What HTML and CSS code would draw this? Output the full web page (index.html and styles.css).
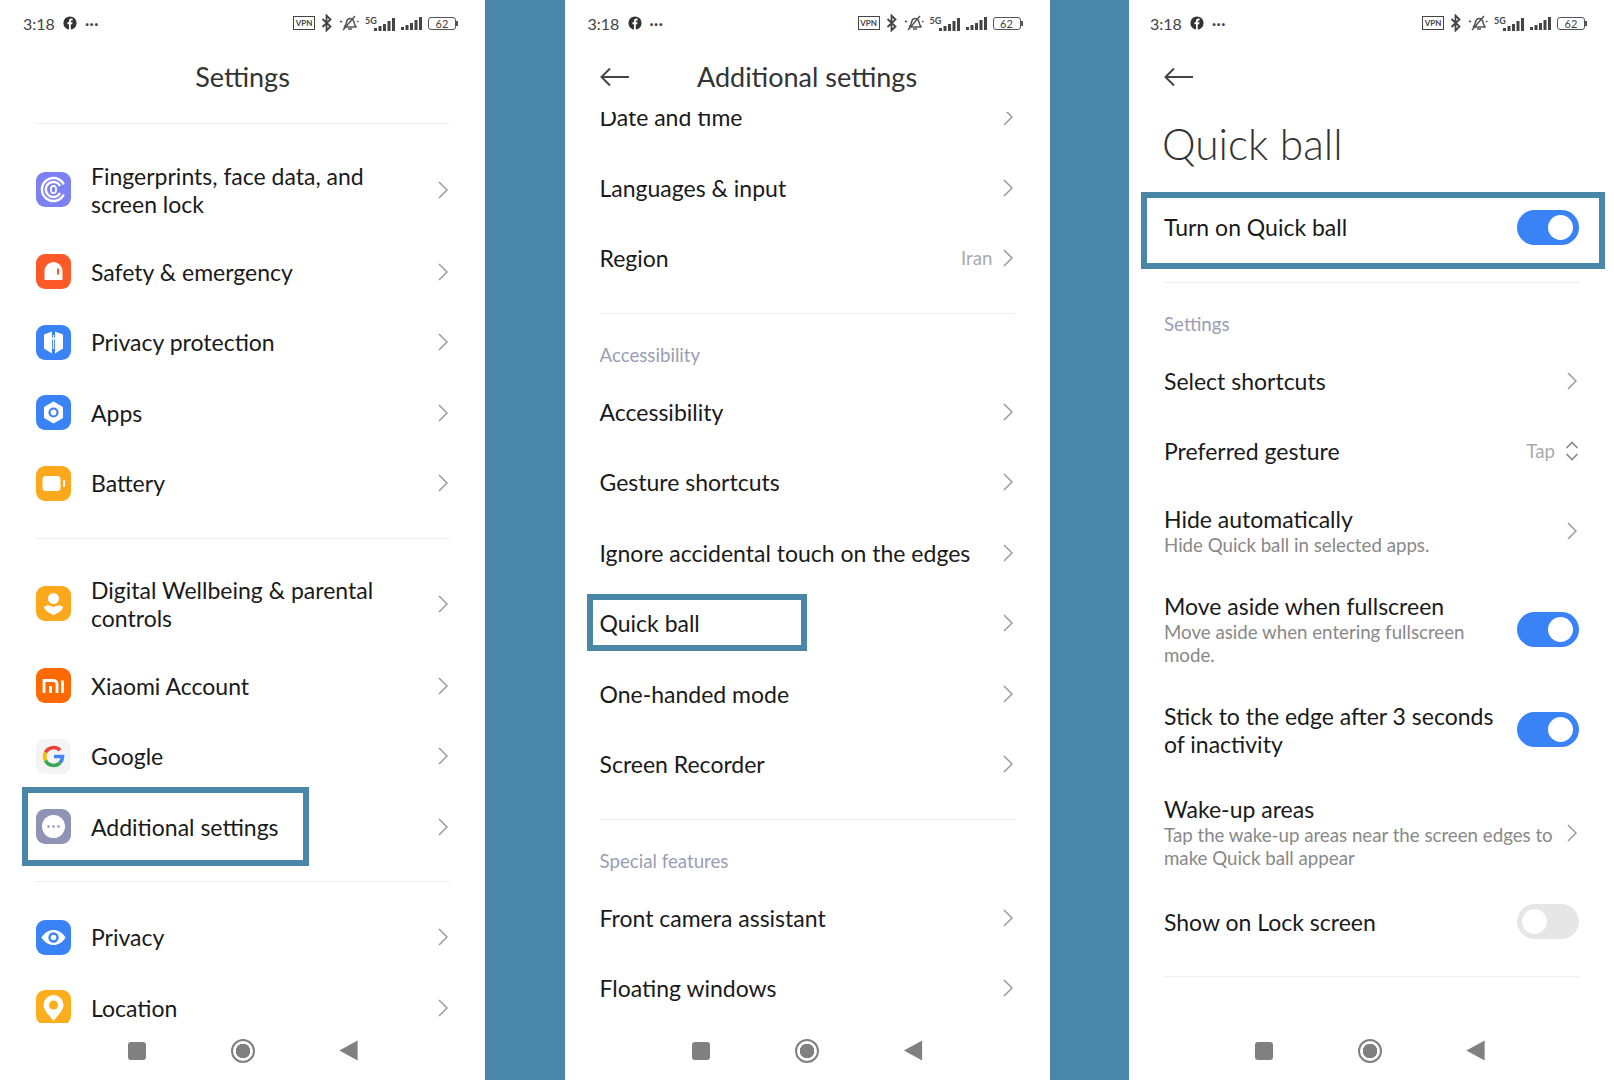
FILE: index.html
```html
<!DOCTYPE html>
<html lang="en">
  <head>
    <meta charset="UTF-8" />
    <title>Quick ball settings</title>
    <link rel="stylesheet" href="styles.css">
  </head>
  <body>
    <svg class="defs" width="0" height="0">
      <symbol id="chev" viewBox="0 0 10 18"><path d="M1 1l8 8-8 8" fill="none" stroke="#9a9a9a" stroke-width="1.500"/></symbol>
      <symbol id="back" viewBox="0 0 30 20"><path d="M10 1.500L1.500 10l8.500 8.500M1.500 10H29" fill="none" stroke="#444" stroke-width="2"/></symbol>
      <symbol id="fb" viewBox="0 0 14 14"><circle cx="7" cy="7" r="6.600" fill="#333"/><path d="M6 14V8.200H4.400V6.200H6V5c0-1.600 1-2.400 2.400-2.400.6 0 1.200.1 1.200.1v1.700h-.8c-.7 0-1 .4-1 .9v.9h1.700l-.3 2H7.800V14z" fill="#fff"/></symbol>
      <symbol id="bt" viewBox="0 0 12 18"><path d="M1.500 5l8 7.500L5.500 16.500V1.500l4 4-8 7.500" fill="none" stroke="#444" stroke-width="1.800"/></symbol>
      <symbol id="mute" viewBox="0 0 20 18"><path d="M5 13c2-1 2-3 2.500-5s2-3.500 3.500-3.500 3.500 1.500 4 3.500.5 4 2.500 5zM9 15h4M4 16L16 2M1 7l2 1M18 8l1.500-1" fill="none" stroke="#555" stroke-width="1.500"/></symbol>
      <symbol id="signal" viewBox="0 0 21 13"><path d="M0 10h3v3H0zM4.500 8h3v5h-3zM9 6h3v7H9zM13.500 3h3v10h-3zM18 0h3v13h-3z" fill="#444"/></symbol>
      <symbol id="updown" viewBox="0 0 14 20"><path d="M1.500 7L7 1.500 12.500 7M1.500 13L7 18.500 12.500 13" fill="none" stroke="#888" stroke-width="1.600"/></symbol>
    </svg>

    <div class="screen">
      <section class="panel">
        <div class="status">
          <span class="clock">3:18</span>
          <svg class="ic-fb"><use href="#fb"/></svg>
          <span class="more">···</span>
          <div class="status-right">
            <span class="vpn">VPN</span>
            <svg class="ic-bt"><use href="#bt"/></svg>
            <svg class="ic-mute"><use href="#mute"/></svg>
            <span class="net"><b>5G</b><svg class="ic-signal"><use href="#signal"/></svg></span>
            <svg class="ic-signal"><use href="#signal"/></svg>
            <span class="batt">62</span>
          </div>
        </div>
        <header class="head">
          <span></span>
          <h1>Settings</h1>
          <span></span>
        </header>
        <div class="body">
          <div class="line first-line"></div>
          <div class="row row-tall">
            <svg class="app" viewBox="0 0 35 35"><rect width="35" height="35" rx="9" fill="#7b80f2"/><path d="M27.800 12.500A11.500 11.500 0 1 0 27.800 22.500M24 14A7.500 7.500 0 1 0 24 21" fill="none" stroke="#fff" stroke-width="2.400"/><ellipse cx="17.500" cy="17.500" rx="2.600" ry="3.600" fill="none" stroke="#fff" stroke-width="1.800"/></svg>
            <span class="name">Fingerprints, face data, and<br>screen lock</span>
            <svg class="chev"><use href="#chev"/></svg>
          </div>
          <div class="row">
            <svg class="app" viewBox="0 0 35 35"><rect width="35" height="35" rx="9" fill="#fb5a26"/><path d="M8.500 26V17a9 9 0 0 1 18 0v9z" fill="#fff"/><path d="M22 14.500v6" stroke="#fb5a26" stroke-width="2"/></svg>
            <span class="name">Safety &amp; emergency</span>
            <svg class="chev"><use href="#chev"/></svg>
          </div>
          <div class="row">
            <svg class="app" viewBox="0 0 35 35"><rect width="35" height="35" rx="9" fill="#3a83f7"/><path d="M16 6.500L8 9.500v14l8 5zM19 6.500l8 3v14l-8 5z" fill="#fff"/><path d="M17.500 10v14M15.500 14.500l2-2 2 2" stroke="#fff" stroke-width="1.200" fill="none"/></svg>
            <span class="name">Privacy protection</span>
            <svg class="chev"><use href="#chev"/></svg>
          </div>
          <div class="row">
            <svg class="app" viewBox="0 0 35 35"><rect width="35" height="35" rx="9" fill="#3a83f7"/><path d="M17.500 6.500l9.500 5.500v11l-9.500 5.500L8 23V12z" fill="#fff"/><circle cx="17.500" cy="17.500" r="4" fill="none" stroke="#3a83f7" stroke-width="2.200"/></svg>
            <span class="name">Apps</span>
            <svg class="chev"><use href="#chev"/></svg>
          </div>
          <div class="row">
            <svg class="app" viewBox="0 0 35 35"><rect width="35" height="35" rx="9" fill="#fca81c"/><rect x="6.500" y="10" width="18" height="15" rx="3" fill="#fff"/><rect x="27" y="14" width="2" height="7" rx="1" fill="#fff"/></svg>
            <span class="name">Battery</span>
            <svg class="chev"><use href="#chev"/></svg>
          </div>
          <div class="line line-tight"></div>
          <div class="row row-tall">
            <svg class="app" viewBox="0 0 35 35"><rect width="35" height="35" rx="9" fill="#fca81c"/><circle cx="17.500" cy="12.500" r="5.500" fill="#fff"/><path d="M8 21c3-2.500 6-1.500 9.500 0 3.500-1.500 6.500-2.500 9.500 0 0 3-5 6-9.500 8C13 27 8 24 8 21z" fill="#fff"/></svg>
            <span class="name">Digital Wellbeing &amp; parental<br>controls</span>
            <svg class="chev"><use href="#chev"/></svg>
          </div>
          <div class="row">
            <svg class="app" viewBox="0 0 35 35"><rect width="35" height="35" rx="9" fill="#ff6a00"/><path d="M8 25V12.500h9.500a3.500 3.500 0 0 1 3.500 3.500v9M14.500 18v7M26.500 12.500V25" fill="none" stroke="#fff" stroke-width="2.800"/></svg>
            <span class="name">Xiaomi Account</span>
            <svg class="chev"><use href="#chev"/></svg>
          </div>
          <div class="row">
            <svg class="app" viewBox="0 0 35 35"><rect width="35" height="35" rx="9" fill="#f4f4f4"/><g fill="none" stroke-width="3.600"><path d="M24 11.300A9 9 0 0 0 9.500 13.500" stroke="#ea4335"/><path d="M9.500 13.500a9 9 0 0 0 0 8" stroke="#fbbc05"/><path d="M9.500 21.500A9 9 0 0 0 24 23.700" stroke="#34a853"/><path d="M24 23.700a9 9 0 0 0 2.500-6.200H18" stroke="#4285f4"/></g></svg>
            <span class="name">Google</span>
            <svg class="chev"><use href="#chev"/></svg>
          </div>
          <div class="row">
            <svg class="app" viewBox="0 0 35 35"><rect width="35" height="35" rx="9" fill="#8f93b5"/><circle cx="17.500" cy="17.500" r="11.500" fill="#fff"/><circle cx="12.500" cy="17.500" r="1.200" fill="#8f93b5"/><circle cx="17.500" cy="17.500" r="1.200" fill="#8f93b5"/><circle cx="22.500" cy="17.500" r="1.200" fill="#8f93b5"/></svg>
            <span class="name">Additional settings</span>
            <svg class="chev"><use href="#chev"/></svg>
            <div class="mark mark-additional"></div>
          </div>
          <div class="line line-loose"></div>
          <div class="row">
            <svg class="app" viewBox="0 0 35 35"><rect width="35" height="35" rx="9" fill="#3a83f7"/><path d="M5.500 17.500C9 12 13 10 17.500 10s8.500 2 12 7.500C26 23 22 25 17.500 25S9 23 5.500 17.500z" fill="#fff"/><circle cx="17.500" cy="17.500" r="4" fill="none" stroke="#3a83f7" stroke-width="2.400"/></svg>
            <span class="name">Privacy</span>
            <svg class="chev"><use href="#chev"/></svg>
          </div>
          <div class="row">
            <svg class="app" viewBox="0 0 35 35"><rect width="35" height="35" rx="9" fill="#fcae1c"/><path d="M17.500 31C12 24 7.500 20 7.500 15a10 10 0 0 1 20 0c0 5-4.500 9-10 16z" fill="#fff"/><circle cx="17.500" cy="15" r="4.500" fill="#fcae1c"/></svg>
            <span class="name">Location</span>
            <svg class="chev"><use href="#chev"/></svg>
          </div>
        </div>
        <nav class="nav"><i class="nav-square"></i><i class="nav-circle"></i><i class="nav-back"></i></nav>
      </section>

      <section class="panel">
        <div class="status">
          <span class="clock">3:18</span>
          <svg class="ic-fb"><use href="#fb"/></svg>
          <span class="more">···</span>
          <div class="status-right">
            <span class="vpn">VPN</span>
            <svg class="ic-bt"><use href="#bt"/></svg>
            <svg class="ic-mute"><use href="#mute"/></svg>
            <span class="net"><b>5G</b><svg class="ic-signal"><use href="#signal"/></svg></span>
            <svg class="ic-signal"><use href="#signal"/></svg>
            <span class="batt">62</span>
          </div>
        </div>
        <header class="head">
          <svg class="ic-back"><use href="#back"/></svg>
          <h1>Additional settings</h1>
          <span></span>
        </header>
        <div class="body">
          <div class="row row-clipped"><span class="name">Date and time</span><svg class="chev"><use href="#chev"/></svg></div>
          <div class="row"><span class="name">Languages &amp; input</span><svg class="chev"><use href="#chev"/></svg></div>
          <div class="row"><span class="name">Region</span><span class="value">Iran</span><svg class="chev"><use href="#chev"/></svg></div>
          <div class="line"></div>
          <div class="label">Accessibility</div>
          <div class="row"><span class="name">Accessibility</span><svg class="chev"><use href="#chev"/></svg></div>
          <div class="row"><span class="name">Gesture shortcuts</span><svg class="chev"><use href="#chev"/></svg></div>
          <div class="row"><span class="name">Ignore accidental touch on the edges</span><svg class="chev"><use href="#chev"/></svg></div>
          <div class="row"><span class="name">Quick ball</span><svg class="chev"><use href="#chev"/></svg><div class="mark mark-quick"></div></div>
          <div class="row"><span class="name">One-handed mode</span><svg class="chev"><use href="#chev"/></svg></div>
          <div class="row"><span class="name">Screen Recorder</span><svg class="chev"><use href="#chev"/></svg></div>
          <div class="line"></div>
          <div class="label">Special features</div>
          <div class="row"><span class="name">Front camera assistant</span><svg class="chev"><use href="#chev"/></svg></div>
          <div class="row"><span class="name">Floating windows</span><svg class="chev"><use href="#chev"/></svg></div>
        </div>
        <nav class="nav"><i class="nav-square"></i><i class="nav-circle"></i><i class="nav-back"></i></nav>
      </section>

      <section class="panel">
        <div class="status">
          <span class="clock">3:18</span>
          <svg class="ic-fb"><use href="#fb"/></svg>
          <span class="more">···</span>
          <div class="status-right">
            <span class="vpn">VPN</span>
            <svg class="ic-bt"><use href="#bt"/></svg>
            <svg class="ic-mute"><use href="#mute"/></svg>
            <span class="net"><b>5G</b><svg class="ic-signal"><use href="#signal"/></svg></span>
            <svg class="ic-signal"><use href="#signal"/></svg>
            <span class="batt">62</span>
          </div>
        </div>
        <header class="head">
          <svg class="ic-back"><use href="#back"/></svg>
          <span></span>
          <span></span>
        </header>
        <div class="body">
          <h2 class="big-title">Quick ball</h2>
          <div class="row"><span class="name">Turn on Quick ball</span><i class="toggle on"></i><div class="mark mark-turnon"></div></div>
          <div class="line"></div>
          <div class="label">Settings</div>
          <div class="row"><span class="name">Select shortcuts</span><svg class="chev"><use href="#chev"/></svg></div>
          <div class="row"><span class="name">Preferred gesture</span><span class="value">Tap</span><svg class="ic-updown"><use href="#updown"/></svg></div>
          <div class="row row-hide">
            <div class="name">Hide automatically<p class="sub">Hide Quick ball in selected apps.</p></div>
            <svg class="chev"><use href="#chev"/></svg>
          </div>
          <div class="row row-move">
            <div class="name">Move aside when fullscreen<p class="sub">Move aside when entering fullscreen<br>mode.</p></div>
            <i class="toggle on"></i>
          </div>
          <div class="row row-stick">
            <span class="name">Stick to the edge after 3 seconds<br>of inactivity</span>
            <i class="toggle on"></i>
          </div>
          <div class="row row-move">
            <div class="name">Wake-up areas<p class="sub">Tap the wake-up areas near the screen edges to<br>make Quick ball appear</p></div>
            <svg class="chev"><use href="#chev"/></svg>
          </div>
          <div class="row"><span class="name">Show on Lock screen</span><i class="toggle"></i></div>
          <div class="line"></div>
        </div>
        <nav class="nav"><i class="nav-square"></i><i class="nav-circle"></i><i class="nav-back"></i></nav>
      </section>
    </div>
  </body>
</html>
```

FILE: styles.css
```css
* {
  box-sizing: border-box;
}
body {
  margin: 0;
  background-color: #4a86a8;
  font-family: Lato, "Noto Sans", sans-serif;
  color: #1a1a1a;
}
.defs {
  position: absolute;
}
.screen {
  display: flex;
  justify-content: space-between;
  width: 1614px;
  height: 1080px;
  overflow: hidden;
}
.panel {
  display: flex;
  flex-direction: column;
  width: 485px;
  height: 1080px;
  background: #fff;
}

/* status bar */
.status {
  display: flex;
  align-items: center;
  flex: none;
  height: 46px;
  padding: 0 27px 0 23px;
  color: #444;
}
.panel:last-child .status {
  padding-left: 21px;
}
.clock {
  width: 40px;
  font-size: 16px;
}
.ic-fb {
  width: 14px;
  height: 14px;
}
.more {
  margin-left: 8px;
  font-size: 15px;
  font-weight: 700;
  letter-spacing: 0.5px;
}
.status-right {
  display: flex;
  align-items: center;
  gap: 6px;
  margin-left: auto;
}
.vpn {
  width: 22px;
  height: 14px;
  border: 1px solid #444;
  font-size: 8px;
  font-weight: 700;
  line-height: 12px;
  text-align: center;
}
.ic-bt {
  width: 12px;
  height: 18px;
}
.ic-mute {
  width: 20px;
  height: 18px;
}
.net {
  display: flex;
  align-items: flex-end;
}
.net b {
  width: 9px;
  margin-bottom: 6px;
  font-size: 9px;
  line-height: 9px;
}
.ic-signal {
  width: 21px;
  height: 13px;
}
.batt {
  position: relative;
  width: 28px;
  height: 13px;
  margin-right: 2px;
  border: 1px solid #555;
  border-radius: 3px;
  font-size: 11px;
  line-height: 11px;
  text-align: center;
}
.batt::after {
  content: "";
  position: absolute;
  top: 3px;
  right: -3px;
  width: 2px;
  height: 5px;
  background: #555;
}

/* headers */
.head {
  display: grid;
  grid-template-columns: 1fr auto 1fr;
  align-items: center;
  flex: none;
  height: 66px;
  padding: 0 35px 6px;
}
.head h1 {
  margin: 0;
  font-size: 27px;
  font-weight: 400;
  color: #333;
}
.ic-back {
  width: 30px;
  height: 20px;
  margin-top: 1px;
}
.big-title {
  margin: 0;
  padding: 0 33px 16px;
  font-size: 42.500px;
  font-weight: 300;
  line-height: 64px;
  color: #333;
}

/* list */
.body {
  flex: 1;
  overflow: hidden;
}
.row {
  position: relative;
  display: flex;
  align-items: center;
  height: 70.5px;
  padding: 0 35px;
}
.row-tall {
  height: 94px;
}
.row-clipped {
  margin-top: -30px;
}
.row-hide {
  height: 86px;
  padding-top: 3px;
}
.row-move {
  height: 111px;
  padding-top: 3px;
}
.row-stick {
  height: 92px;
}
.app {
  flex: none;
  width: 35px;
  height: 35px;
  margin: 0 20px 0 1px;
}
.name {
  flex: 1;
  font-size: 23px;
  line-height: 28px;
  white-space: nowrap;
}
.sub {
  margin: 1.500px 0 0;
  font-size: 18.700px;
  line-height: 23px;
  color: #888;
}
.value {
  margin-right: 10px;
  font-size: 18.700px;
  color: #aaa;
}
.chev {
  flex: none;
  width: 10px;
  height: 18px;
  margin-right: 2px;
}
.ic-updown {
  flex: none;
  width: 14px;
  height: 20px;
}
.line {
  height: 1px;
  margin: 19px 35px;
  background: #efefef;
}
.first-line {
  margin-top: 10.5px;
}
.line-tight {
  margin-bottom: 18px;
}
.line-loose {
  margin-bottom: 20px;
}
.label {
  height: 44px;
  padding: 0 35px;
  font-size: 18.700px;
  line-height: 44px;
  color: #9a9db5;
}

/* toggles */
.toggle {
  position: relative;
  flex: none;
  width: 62px;
  height: 35px;
  border-radius: 18px;
  background: #e6e6e6;
}
.toggle::after {
  content: "";
  position: absolute;
  top: 5px;
  left: 5px;
  width: 25px;
  height: 25px;
  border-radius: 50%;
  background: #fff;
}
.toggle.on {
  background: #3a83f7;
}
.toggle.on::after {
  left: 31px;
}

/* annotation boxes drawn over the screenshots */
.mark {
  position: absolute;
  border: 6px solid #4a86a8;
}
.mark-additional {
  top: -5px;
  left: 22px;
  width: 287px;
  height: 79px;
}
.mark-quick {
  top: 6px;
  left: 22px;
  width: 220px;
  height: 57px;
}
.mark-turnon {
  top: 0;
  left: 12px;
  width: 464px;
  height: 77px;
}

/* nav bar */
.nav {
  display: flex;
  align-items: center;
  justify-content: center;
  gap: 82px;
  flex: none;
  height: 57px;
  padding-bottom: 2px;
}
.panel:last-child .nav {
  padding-right: 4px;
}
.nav i {
  display: block;
  width: 24px;
  height: 24px;
}
.nav-square {
  background: #808080;
  border: 3.500px solid #fff;
  border-radius: 6px;
}
.nav-circle {
  border: 2px solid #808080;
  border-radius: 50%;
  background: radial-gradient(circle, #808080 0 7px, #fff 7.500px);
}
.nav-back {
  background: #808080;
  clip-path: polygon(88% 8%, 88% 92%, 12% 50%);
}
```
